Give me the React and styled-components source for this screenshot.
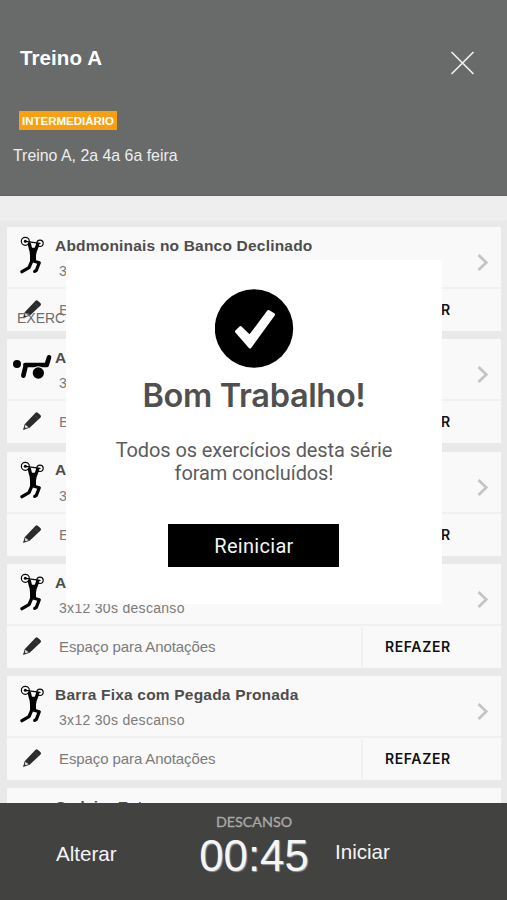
import React from 'react';
import styled, { createGlobalStyle } from 'styled-components';

const GlobalStyle = createGlobalStyle`
  * {
    box-sizing: border-box;
  }
  body {
    margin: 0;
    font-family: 'Liberation Sans', Arial, sans-serif;
  }
`;

const Screen = styled.div`
  position: relative;
  display: flex;
  flex-direction: column;
  width: 507px;
  height: 900px;
  overflow: hidden;
  background: #ebebeb;
`;

const Header = styled.header`
  flex: none;
  display: flex;
  justify-content: space-between;
  height: 196px;
  padding: 45px 32px 0 13px;
  background: #696a6a;
  border-bottom: 1px solid #606060;
  color: #fff;
`;

const HeaderInfo = styled.div`
  display: flex;
  flex-direction: column;
  align-items: flex-start;
`;

const Title = styled.h1`
  margin: 0 0 0 7px;
  font-size: 20.5px;
  line-height: 26px;
  letter-spacing: 0.1px;
`;

const Level = styled.span`
  margin: 40px 0 0 6px;
  padding: 0 3px;
  height: 19px;
  background: #f8a010;
  font-size: 11.5px;
  font-weight: bold;
  line-height: 20px;
  white-space: nowrap;
`;

const Schedule = styled.p`
  margin: 16px 0 0;
  color: #eee;
  font-size: 15.9px;
  line-height: 20px;
`;

const CloseButton = styled.button`
  align-self: flex-start;
  margin-top: 6px;
  padding: 0;
  border: 0;
  background: none;
  line-height: 0;
`;

const List = styled.main`
  flex: 1;
  display: flex;
  flex-direction: column;
  gap: 8.3px;
  min-height: 0;
  padding: 31px 6px 0 7px;
  overflow: hidden;
  background: linear-gradient(#eee 24px, #e9e9e9 25px);
`;

const Card = styled.section`
  flex: none;
  height: 104px;
  background: #f9f9f9;
`;

const CardTop = styled.div`
  display: grid;
  grid-template-columns: 48px 1fr 24px;
  height: 62px;
  border-bottom: 2px solid #f0f0f0;
`;

const FigureCell = styled.div`
  padding: 9px 0 0 ${props => (props.$wide ? '6px' : '13px')};
`;

const ExerciseName = styled.h2`
  margin: 8.9px 0 0;
  color: #4d4d4d;
  font-size: 15.5px;
  line-height: 20px;
  letter-spacing: 0.2px;
  white-space: nowrap;
`;

const Sets = styled.p`
  margin: 6.3px 0 0 4px;
  color: #7c7c7c;
  font-size: 14px;
  line-height: 18px;
  letter-spacing: 0.3px;
`;

const ChevronCell = styled.div`
  padding-top: 27px;
`;

const CardBottom = styled.div`
  display: grid;
  grid-template-columns: 52px 1fr 140px;
  align-items: center;
  height: 42px;
`;

const PencilCell = styled.div`
  padding: 0 0 2px 16px;
  line-height: 0;
`;

const Notes = styled.span`
  padding-bottom: 1px;
  color: #7c7c7c;
  font-size: 15px;
  letter-spacing: -0.1px;
`;

const Redo = styled.button`
  height: 40px;
  padding: 0 0 1px 22px;
  border: 0;
  border-left: 2px solid #f1f1f1;
  background: none;
  color: #111;
  font-family: Inter, 'Liberation Sans', sans-serif;
  font-size: 14px;
  font-weight: 600;
  letter-spacing: 0.6px;
  text-align: left;
`;

const SectionLabel = styled.span`
  position: absolute;
  top: 309px;
  left: 17px;
  color: #6d6d6d;
  font-size: 14px;
  line-height: 18px;
`;

const Modal = styled.div`
  position: absolute;
  top: 260px;
  left: 66px;
  display: flex;
  flex-direction: column;
  align-items: center;
  width: 376px;
  height: 344px;
  padding-top: 29px;
  border-radius: 2px;
  background: #fff;
  text-align: center;
`;

const ModalTitle = styled.h2`
  margin: 7px 0 0;
  color: #505050;
  font-family: Inter, 'Liberation Sans', sans-serif;
  font-size: 32.5px;
  font-weight: 600;
  line-height: 42px;
  letter-spacing: -0.35px;
  white-space: nowrap;
`;

const ModalText = styled.p`
  margin: 22px 0 0;
  color: #5c5c5c;
  font-family: Roboto, 'Liberation Sans', sans-serif;
  font-size: 20px;
  line-height: 23px;
  letter-spacing: -0.1px;
  white-space: nowrap;
`;

const RestartButton = styled.button`
  width: 171px;
  height: 43px;
  margin: 39px 1px 0 0;
  padding: 0 0 0 1px;
  border: 0;
  background: #000;
  color: #f4f4f4;
  font-family: Roboto, 'Liberation Sans', sans-serif;
  font-size: 20px;
  letter-spacing: 0.3px;
`;

const Footer = styled.footer`
  flex: none;
  display: grid;
  grid-template-columns: 173px 162px 1fr;
  height: 97px;
  background: #424241;
  color: #f5f5f5;
`;

const FooterAction = styled.button`
  align-self: start;
  margin-top: ${props => props.$top};
  padding: 0 0 0 ${props => props.$indent || 0};
  border: 0;
  background: none;
  color: inherit;
  font-family: inherit;
  font-size: 20.6px;
  line-height: 24px;
  text-align: left;
`;

const Timer = styled.div`
  display: flex;
  flex-direction: column;
  align-items: center;
`;

const TimerLabel = styled.span`
  margin-top: 10px;
  color: #aaa;
  font-family: Lato, sans-serif;
  font-size: 14.3px;
  line-height: 18px;
  -webkit-text-stroke: 0.3px #aaa;
`;

const TimerValue = styled.span`
  font-size: 43.8px;
  line-height: 50px;
  text-shadow: 1px 1px 1px #999;
`;

const Lifter = () => (
  <svg width="24" height="38" viewBox="0 0 72 114" fill="none" stroke="#050505" strokeLinecap="round" strokeLinejoin="round">
    <circle cx="16" cy="16" r="12" strokeWidth="3.5" />
    <circle cx="16" cy="16" r="4.5" fill="#050505" stroke="none" />
    <circle cx="60" cy="22" r="9.5" strokeWidth="3.5" />
    <path d="M17 16L60 22" strokeWidth="3.5" />
    <path d="M28 24L32 40M53 26L47 42" strokeWidth="10" />
    <path d="M30 37L50 37L46 58L46 75L32 75L32 58Z" fill="#050505" strokeWidth="4" />
    <path d="M36 74L27 95L6 107" strokeWidth="10" />
    <path d="M40 75L58 80L49 103L44 106" strokeWidth="9.5" />
  </svg>
);

const Bench = () => (
  <svg width="40" height="32" viewBox="0 0 120 96" fill="none" stroke="#050505" strokeLinecap="round" strokeLinejoin="round">
    <circle cx="12" cy="48" r="12" fill="#050505" stroke="none" />
    <path d="M38 54L31 83M37 51L101 51L108 28" strokeWidth="14" />
    <circle cx="76" cy="75" r="20" fill="#f9f9f9" stroke="none" />
    <circle cx="76" cy="75" r="17" fill="#050505" stroke="none" />
  </svg>
);

const Pencil = () => (
  <svg width="18" height="18" viewBox="0 0 54 54">
    <path d="M0 54L5 37L37 3Q41 -1 45 3L52 9Q56 13 52 17L20 47Z" fill="#2b2b2b" />
    <path d="M7 38L17 46L9 49L5 46Z" fill="#d5d5d5" />
    <path d="M35 10L45 20" stroke="#666" strokeWidth="1.5" />
  </svg>
);

const Chevron = () => (
  <svg width="12" height="17" viewBox="0 0 12 17" fill="none" stroke="#c5c5c5" strokeWidth="2.8">
    <path d="M1.5 1L9.3 8.5L1.5 16" />
  </svg>
);

const figures = {
  lifter: <Lifter />,
  bench: <Bench />,
};

const exercises = [
  { name: 'Abdmoninais no Banco Declinado', figure: 'lifter' },
  { name: 'Abdominais', figure: 'bench' },
  { name: 'Abdominais', figure: 'lifter' },
  { name: 'Abdominais', figure: 'lifter' },
  { name: 'Barra Fixa com Pegada Pronada', figure: 'lifter' },
  { name: 'Cadeira Extensora' },
];

const Exercise = ({ name, figure }) => (
  <Card>
    <CardTop>
      <FigureCell $wide={figure === 'bench'}>{figures[figure]}</FigureCell>
      <div>
        <ExerciseName>{name}</ExerciseName>
        <Sets>3x12 30s descanso</Sets>
      </div>
      <ChevronCell>
        <Chevron />
      </ChevronCell>
    </CardTop>
    <CardBottom>
      <PencilCell>
        <Pencil />
      </PencilCell>
      <Notes>Espaço para Anotações</Notes>
      <Redo>REFAZER</Redo>
    </CardBottom>
  </Card>
);

const App = () => (
  <>
    <GlobalStyle />
    <Screen>
      <Header>
        <HeaderInfo>
          <Title>Treino A</Title>
          <Level>INTERMEDIÁRIO</Level>
          <Schedule>Treino A, 2a 4a 6a feira</Schedule>
        </HeaderInfo>
        <CloseButton aria-label="Fechar">
          <svg width="25" height="24" viewBox="0 0 25 24" stroke="#f2f2f2" strokeWidth="1.6">
            <path d="M1.5 1L23.5 23M23.5 1L1.5 23" />
          </svg>
        </CloseButton>
      </Header>
      <List>
        {exercises.map((exercise, index) => (
          <Exercise key={index} {...exercise} />
        ))}
      </List>
      <Footer>
        <FooterAction $top="39px" $indent="56px">Alterar</FooterAction>
        <Timer>
          <TimerLabel>DESCANSO</TimerLabel>
          <TimerValue>00:45</TimerValue>
        </Timer>
        <FooterAction $top="37px">Iniciar</FooterAction>
      </Footer>
      <SectionLabel>EXERCÍCIOS</SectionLabel>
      <Modal>
        <svg width="79" height="79" viewBox="0 0 79 79">
          <circle cx="39" cy="39.5" r="39.2" fill="#000" />
          <path
            d="M21.5 42.5L25.5 38.5L34.8 47.5L53.5 22.5L58.5 25.5L35 58Z"
            fill="#fff"
            stroke="#fff"
            strokeWidth="3"
            strokeLinejoin="round"
          />
        </svg>
        <ModalTitle>Bom Trabalho!</ModalTitle>
        <ModalText>
          Todos os exercícios desta série
          <br />
          foram concluídos!
        </ModalText>
        <RestartButton>Reiniciar</RestartButton>
      </Modal>
    </Screen>
  </>
);

export default App;
